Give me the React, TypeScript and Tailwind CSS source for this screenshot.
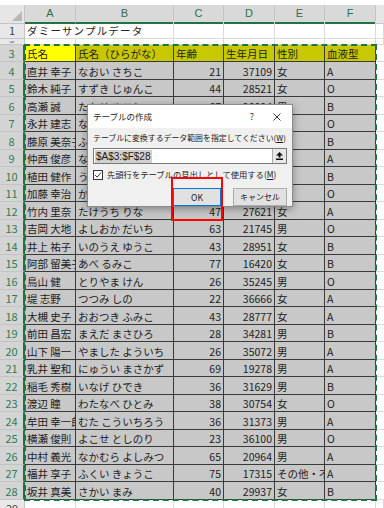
const cols = "grid grid-cols-[25px_51px_98px_50px_51px_50px_51px_8px]";

const rows: string[][] = [
  ["直井 幸子", "なおい さちこ", "21", "37109", "女", "A"],
  ["鈴木 純子", "すずき じゅんこ", "44", "28521", "女", "O"],
  ["高瀬 誠", "たかせ まこと", "67", "20094", "男", "B"],
  ["永井 建志", "ながい けんじ", "52", "25671", "男", "O"],
  ["藤原 美奈子", "ふじわら みなこ", "31", "33210", "女", "B"],
  ["仲西 俊彦", "なかにし としひこ", "58", "23415", "男", "A"],
  ["植田 健作", "うえだ けんさく", "34", "32110", "男", "B"],
  ["加藤 幸治", "かとう こうじ", "49", "26830", "男", "O"],
  ["竹内 里奈", "たけうち りな", "47", "27621", "女", "A"],
  ["吉岡 大地", "よしおか だいち", "63", "21745", "男", "O"],
  ["井上 祐子", "いのうえ ゆうこ", "43", "28951", "女", "B"],
  ["阿部 留美子", "あべ るみこ", "77", "16420", "女", "B"],
  ["鳥山 健", "とりやま けん", "26", "35245", "男", "O"],
  ["堤 志野", "つつみ しの", "22", "36666", "女", "A"],
  ["大槻 史子", "おおつき ふみこ", "43", "28777", "女", "A"],
  ["前田 昌宏", "まえだ まさひろ", "28", "34281", "男", "B"],
  ["山下 陽一", "やました よういち", "26", "35072", "男", "A"],
  ["乳井 聖和", "にゅうい まさかず", "69", "19278", "男", "A"],
  ["稲毛 秀樹", "いなげ ひでき", "36", "31629", "男", "B"],
  ["渡辺 瞳", "わたなべ ひとみ", "38", "30754", "女", "O"],
  ["牟田 幸一郎", "むた こういちろう", "36", "31373", "男", "A"],
  ["横瀬 俊則", "よこせ としのり", "23", "36100", "男", "O"],
  ["中村 義光", "なかむら よしみつ", "65", "20964", "男", "A"],
  ["福井 享子", "ふくい きょうこ", "75", "17315", "その他・不明", "A"],
  ["坂井 真美", "さかい まみ", "40", "29937", "女", "B"],
];

const head = ["氏名", "氏名（ひらがな）", "年齢", "生年月日", "性別", "血液型"];

function RowLabel({ n, sel }: { n: string; sel?: boolean }) {
  return sel ? (
    <div className="flex items-end justify-center border-b border-r-2 border-b-[#c4c4c4] border-r-[#217346] bg-[#d4d4d4] text-[11px] leading-[15px] text-[#2f7d52]">
      {n}
    </div>
  ) : (
    <div className="flex items-end justify-center overflow-hidden border-b border-r border-[#c4c4c4] bg-[#e8e8e8] text-[11px] leading-[15px] text-[#444]">
      {n}
    </div>
  );
}

function Cell({ v, num }: { v: string; num?: boolean }) {
  return (
    <div
      className={
        num
          ? "flex items-end justify-end overflow-hidden whitespace-nowrap border-b border-r border-[#3a3a3a] bg-[#c8c8c8] pr-[2px] leading-[15px]"
          : "flex items-end overflow-hidden whitespace-nowrap border-b border-r border-[#3a3a3a] bg-[#c8c8c8] pl-[2px] leading-[15px]"
      }
    >
      {v}
    </div>
  );
}

function Dialog() {
  return (
    <div className="absolute left-[87px] top-[104px] flex h-[103px] w-[206px] flex-col border border-[#8c8c8c] bg-[#f0f0f0] text-[8px] text-[#1a1a1a] shadow-[0_2px_8px_rgba(0,0,0,0.35)]">
      <div className="flex h-[23px] items-center bg-white pl-[5px]">
        <span className="flex-1 text-[8.5px]">テーブルの作成</span>
        <span className="w-[20px] text-center text-[9px] text-[#333]">?</span>
        <span className="flex w-[30px] justify-center">
          <svg width="8" height="8" viewBox="0 0 8 8">
            <path d="M0.5 0.5 L7.5 7.5 M7.5 0.5 L0.5 7.5" stroke="#222" strokeWidth="0.9" />
          </svg>
        </span>
      </div>
      <div className="flex flex-1 flex-col px-[5px]">
        <div className="mt-[4px] h-[12px] whitespace-nowrap text-[7.9px] leading-[12px]">
          テーブルに変換するデータ範囲を指定してください(<span className="underline">W</span>)
        </div>
        <div className="mt-[4px] flex h-[16px] w-[194px] items-center border border-[#7a7a7a] bg-white">
          <div className="flex flex-1 pl-[1px]">
            <span className="bg-[#d0d0d0] px-[1px] font-['Liberation_Sans',sans-serif] text-[10px] leading-[13px]">$A$3:$F$28</span>
          </div>
          <div className="flex h-[14px] w-[14px] items-center justify-center border-l border-[#adadad] bg-[#e8e8e8]">
            <svg width="7" height="8" viewBox="0 0 7 8">
              <path d="M3.5 0 L7 3.5 L4.5 3.5 L4.5 5.5 L2.5 5.5 L2.5 3.5 L0 3.5 Z" fill="#111" />
              <rect x="0" y="6.5" width="7" height="1.5" fill="#111" />
            </svg>
          </div>
        </div>
        <div className="mt-[5px] flex h-[11px] items-center">
          <div className="flex h-[10px] w-[10px] items-center justify-center border border-[#333] bg-white">
            <svg width="8" height="8" viewBox="0 0 8 8">
              <path d="M1 4 L3.2 6.2 L7 1.5" stroke="#222" strokeWidth="0.9" fill="none" />
            </svg>
          </div>
          <span className="ml-[4px] whitespace-nowrap text-[8.3px]">
            先頭行をテーブルの見出しとして使用する(<span className="underline">M</span>)
          </span>
        </div>
        <div className="mt-[8px] flex justify-end gap-[12px]">
          <div className="flex h-[18px] w-[48px] items-center justify-center border border-[#0078d7] bg-[#e1e1e1] text-[8.5px]">
            OK
          </div>
          <div className="flex h-[18px] w-[54px] items-center justify-center border border-[#adadad] bg-[#e1e1e1] text-[8px]">
            キャンセル
          </div>
        </div>
      </div>
    </div>
  );
}

export default function App() {
  return (
    <div className="relative h-[508px] w-[384px] overflow-hidden bg-white font-['Noto_Sans_CJK_JP',sans-serif] text-[10.5px] text-[#222]">
      <div className="h-[5px]" />
      <div className={`${cols} h-[16px]`}>
        <div className="relative border-b border-r border-[#c4c4c4] bg-[#e6e6e6]">
          <svg className="absolute bottom-[2px] right-[2px]" width="10" height="10" viewBox="0 0 10 10">
            <polygon points="10,0 10,10 0,10" fill="#b9b9b9" />
          </svg>
        </div>
        {["A", "B", "C", "D", "E", "F"].map((c) => (
          <div
            key={c}
            className="flex items-center justify-center border-b-2 border-r border-b-[#217346] border-r-[#c4c4c4] bg-[#d9d9d9] font-['Liberation_Sans',sans-serif] text-[11px] text-[#2f6f4a]"
          >
            {c}
          </div>
        ))}
        <div className="border-b border-[#c4c4c4] bg-[#e6e6e6]" />
      </div>

      <div className={`${cols} h-[18px]`}>
        <RowLabel n="1" />
        <div className="col-span-2 flex items-end whitespace-nowrap border-b border-r border-[#dadada] pl-[2px] tracking-[1.2px] leading-[15px]">
          ダミーサンプルデータ
        </div>
        {[0, 1, 2, 3, 4].map((i) => (
          <div key={i} className="border-b border-r border-[#dadada]" />
        ))}
      </div>

      <div className={`${cols} h-[6px]`}>
        <div className="flex items-center justify-center overflow-hidden border-b border-r border-[#c4c4c4] bg-[#e8e8e8]">
          <span className="scale-y-[0.25] text-[11px] leading-[11px] text-[#666]">2</span>
        </div>
        {[0, 1, 2, 3, 4, 5, 6].map((i) => (
          <div key={i} className="border-b border-r border-[#dadada]" />
        ))}
      </div>

      <div className={`${cols} h-[17px]`}>
        <RowLabel n="3" sel />
        <div className="flex items-end border-b border-r border-[#3a3a3a] bg-[#ffff00] pl-[2px] leading-[15px]">{head[0]}</div>
        {head.slice(1).map((h) => (
          <div key={h} className="flex items-end whitespace-nowrap border-b border-r border-[#3a3a3a] bg-[#c8c800] pl-[2px] leading-[15px]">
            {h}
          </div>
        ))}
        <div className="border-b border-[#dadada]" />
      </div>

      {rows.map((r, i) => (
        <div key={i} className={`${cols} ${i % 2 === 0 ? "h-[18px]" : "h-[17px]"}`}>
          <RowLabel n={String(i + 4)} sel />
          <Cell v={r[0]} />
          <Cell v={r[1]} />
          <Cell v={r[2]} num />
          <Cell v={r[3]} num />
          <Cell v={r[4]} />
          <Cell v={r[5]} />
          <div className="border-b border-[#dadada]" />
        </div>
      ))}

      <div className={`${cols} h-[17px]`}>
        <RowLabel n="29" />
        {[0, 1, 2, 3, 4, 5, 6].map((i) => (
          <div key={i} className="border-b border-r border-[#dadada]" />
        ))}
      </div>

      {/* selection marquee */}
      <div className="pointer-events-none absolute left-[24px] top-[44px] h-[457px] w-[353px] border-2 border-dashed border-[#217346]" />

      <Dialog />

      {/* annotation */}
      <div className="absolute left-[171px] top-[177px] h-[44px] w-[52px] border-2 border-[#ff0000]" />
    </div>
  );
}
